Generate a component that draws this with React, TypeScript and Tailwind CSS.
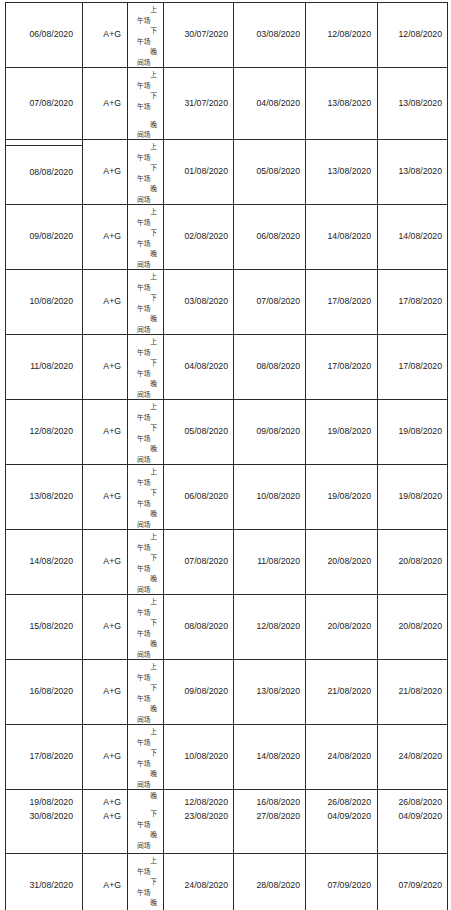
import React from "react";

type Row = {
  h: number;
  a: string[];
  b: string[];
  c: string[];
  d: string[];
  e: string[];
  f: string[];
  kind: "std" | "gap" | "split";
  dbl?: boolean;
};

const r = (
  h: number,
  a: string,
  c: string,
  d: string,
  e: string,
  kind: Row["kind"] = "std",
  dbl = false
): Row => ({
  h,
  a: [a],
  b: ["A+G"],
  c: [c],
  d: [d],
  e: [e],
  f: [e],
  kind,
  dbl,
});

const rows: Row[] = [
  r(65, "06/08/2020", "30/07/2020", "03/08/2020", "12/08/2020"),
  r(72, "07/08/2020", "31/07/2020", "04/08/2020", "13/08/2020", "gap"),
  r(65, "08/08/2020", "01/08/2020", "05/08/2020", "13/08/2020", "std", true),
  r(65, "09/08/2020", "02/08/2020", "06/08/2020", "14/08/2020"),
  r(65, "10/08/2020", "03/08/2020", "07/08/2020", "17/08/2020"),
  r(65, "11/08/2020", "04/08/2020", "08/08/2020", "17/08/2020"),
  r(65, "12/08/2020", "05/08/2020", "09/08/2020", "19/08/2020"),
  r(65, "13/08/2020", "06/08/2020", "10/08/2020", "19/08/2020"),
  r(65, "14/08/2020", "07/08/2020", "11/08/2020", "20/08/2020"),
  r(65, "15/08/2020", "08/08/2020", "12/08/2020", "20/08/2020"),
  r(65, "16/08/2020", "09/08/2020", "13/08/2020", "21/08/2020"),
  r(65, "17/08/2020", "10/08/2020", "14/08/2020", "24/08/2020"),
  {
    h: 64,
    a: ["19/08/2020", "30/08/2020"],
    b: ["A+G", "A+G"],
    c: ["12/08/2020", "23/08/2020"],
    d: ["16/08/2020", "27/08/2020"],
    e: ["26/08/2020", "04/09/2020"],
    f: ["26/08/2020", "04/09/2020"],
    kind: "split",
  },
  r(65, "31/08/2020", "24/08/2020", "28/08/2020", "07/09/2020"),
];

const cjk = { fontFamily: '"Noto Sans CJK SC", "Noto Sans CJK JP", sans-serif' };

function R({ t }: { t: string }) {
  return <div className="text-right">{t}</div>;
}
function L({ t }: { t: string }) {
  return <div className="text-left">{t}</div>;
}

function Sessions({ kind }: { kind: Row["kind"] }) {
  if (kind === "split") {
    return (
      <div className="flex flex-col pl-[9px] pr-[6px] leading-[10.6px]">
        <R t="晚" />
        <div className="mt-[7.5px]">
          <R t="下" />
        </div>
        <L t="午场" />
        <R t="晚" />
        <L t="间场" />
      </div>
    );
  }
  return (
    <div className="flex flex-col pl-[9px] pr-[6px] pt-[1px] leading-[10.6px]">
      <R t="上" />
      <L t="午场" />
      <R t="下" />
      <L t="午场" />
      <div className={kind === "gap" ? "mt-[7.5px]" : ""}>
        <R t="晚" />
      </div>
      <L t="间场" />
    </div>
  );
}

function Cell({ lines, split, pr }: { lines: string[]; split: boolean; pr: string }) {
  if (split) {
    return (
      <div className={`flex flex-col items-end pt-[5px] leading-[14px] border-r border-[#2a2a2a] ${pr}`}>
        {lines.map((l, i) => (
          <div key={i}>{l}</div>
        ))}
      </div>
    );
  }
  return (
    <div className={`flex items-center justify-end border-r border-[#2a2a2a] ${pr}`}>
      {lines[0]}
    </div>
  );
}

export default function App() {
  return (
    <div className="min-h-[910px] w-[451px] bg-white overflow-hidden pt-[2px] pl-[5px]">
      <div
        className="w-[443px] border-l border-t border-[#2a2a2a] text-[8.7px] text-[#222]"
        style={{ fontFamily: '"Liberation Sans", Arial, sans-serif' }}
      >
        {rows.map((row, i) => {
          const split = row.kind === "split";
          return (
            <div
              key={i}
              className="grid grid-cols-[77px_45px_36px_70px_72px_72px_70px] border-b border-[#2a2a2a] overflow-hidden"
              style={{ height: row.h }}
            >
              {row.dbl ? (
                <div className="flex flex-col border-r border-[#2a2a2a]">
                  <div className="mt-[5px] flex flex-1 items-center justify-end border-t border-[#2a2a2a] pr-[9px] pb-[4px]">
                    {row.a[0]}
                  </div>
                </div>
              ) : (
                <Cell lines={row.a} split={split} pr="pr-[9px]" />
              )}
              <Cell lines={row.b} split={split} pr="pr-[6px]" />
              <div className="border-r border-[#2a2a2a] text-[6.8px] text-[#333] overflow-hidden" style={cjk}>
                <Sessions kind={row.kind} />
              </div>
              <Cell lines={row.c} split={split} pr="pr-[5px]" />
              <Cell lines={row.d} split={split} pr="pr-[5px]" />
              <Cell lines={row.e} split={split} pr="pr-[6px]" />
              <Cell lines={row.f} split={split} pr="pr-[5px]" />
            </div>
          );
        })}
      </div>
    </div>
  );
}
